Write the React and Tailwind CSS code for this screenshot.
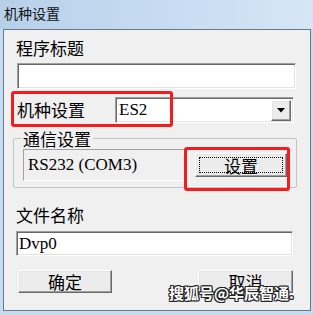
const CJK = "font-['Noto_Sans_CJK_SC',sans-serif]";
const SERIF = "font-['Liberation_Serif','Noto_Sans_CJK_SC',serif]";

const sunken =
  "border border-t-[#a0a0a0] border-l-[#a0a0a0] border-r-white border-b-white shadow-[inset_1px_1px_0_#696969,inset_-1px_-1px_0_#e3e3e3] bg-white";
const raised =
  "border border-t-white border-l-white border-r-[#696969] border-b-[#696969] shadow-[inset_-1px_-1px_0_#a0a0a0,inset_1px_1px_0_#e3e3e3] bg-[#ececec]";

function Label({ children, className = "" }) {
  return (
    <div className={`${CJK} text-[17px] leading-[20px] text-black ${className}`}>{children}</div>
  );
}

export default function App() {
  return (
    <div className="relative w-[313px] h-[315px] bg-[#c5dcf2] overflow-hidden">
      {/* title bar */}
      <div className="h-[29px] pl-[4px] flex items-start bg-gradient-to-r from-[#b7d0ea] via-[#c6dbf1] to-[#d6e6f6]">
        <span className={`${CJK} text-[14px] leading-[20px] mt-[3px] text-[#111]`}>机种设置</span>
      </div>

      {/* dialog body */}
      <div className="ml-[3px] w-[308px] h-[282px] border border-[#6a7888] bg-[#f0f0f0] flex flex-col">
        <Label className="ml-[12px] mt-[8px]">程序标题</Label>
        <div className={`${sunken} ml-[13px] mt-[5px] w-[279px] h-[26px]`} />

        <div className="mt-[8px] flex items-center h-[26px]">
          <Label className="ml-[13px]">机种设置</Label>
          <div className={`${sunken} ml-[30px] w-[179px] h-[26px] flex items-center pl-[3px] pr-[2px]`}>
            <span className={`${SERIF} text-[17px] leading-[20px] text-black flex-1`}>ES2</span>
            <div className={`${raised} w-[20px] h-[21px] flex items-center justify-center`}>
              <svg width="8" height="5" viewBox="0 0 8 5">
                <path d="M0 0H8L4 4.5Z" fill="#000" />
              </svg>
            </div>
          </div>
        </div>

        <fieldset className="mt-[7px] ml-[9px] w-[284px] border border-[#c2c2c2] rounded-[2px] px-[9px] pb-[6px]">
          <legend className={`${CJK} ml-[-2px] px-[2px] text-[17px] leading-[17px] text-black`}>通信设置</legend>
          <div className="mt-[2px] flex items-center gap-[5px]">
            <div className="flex-1 h-[32px] border border-t-[#a0a0a0] border-l-[#a0a0a0] border-r-white border-b-white flex items-center pl-[4px]">
              <span className={`${SERIF} text-[17px] leading-[20px] text-black`}>RS232 (COM3)</span>
            </div>
            <div className={`${raised} w-[92px] h-[24px] p-[3px]`}>
              <div className="h-full border border-dotted border-black flex items-center justify-center">
                <span className={`${CJK} text-[17px] leading-[17px] text-black`}>设置</span>
              </div>
            </div>
          </div>
        </fieldset>

        <Label className="ml-[12px] mt-[17px]">文件名称</Label>
        <div className={`${sunken} ml-[12px] mt-[6px] w-[277px] h-[25px] flex items-center pl-[2px]`}>
          <span className={`${SERIF} text-[17px] leading-[20px] text-black`}>Dvp0</span>
        </div>

        <div className="mt-[14px] flex">
          <div className={`${raised} ml-[14px] w-[94px] h-[23px] flex items-center justify-center`}>
            <span className={`${CJK} text-[17px] leading-[17px] text-black`}>确定</span>
          </div>
          <div className={`${raised} ml-[86px] w-[95px] h-[23px] flex items-center justify-center`}>
            <span className={`${CJK} text-[17px] leading-[17px] text-black`}>取消</span>
          </div>
        </div>
      </div>

      {/* annotations */}
      <div className="absolute left-[11px] top-[91px] w-[162px] h-[36px] border-[3px] border-[#f41c1c] rounded-[3px]" />
      <div className="absolute left-[184px] top-[147px] w-[106px] h-[44px] border-[3px] border-[#f41c1c] rounded-[3px]" />

      {/* watermark */}
      <div
        className={`${CJK} absolute left-[169px] top-[283px] text-[15px] leading-[20px] font-bold text-white`}
        style={{ textShadow: "1px 0 0 #222, -1px 0 0 #222, 0 1px 0 #222, 0 -1px 0 #222, 1px 1px 0 #222, -1px -1px 0 #222, 1px -1px 0 #222, -1px 1px 0 #222" }}
      >
        搜狐号@华辰智通.
      </div>
    </div>
  );
}
